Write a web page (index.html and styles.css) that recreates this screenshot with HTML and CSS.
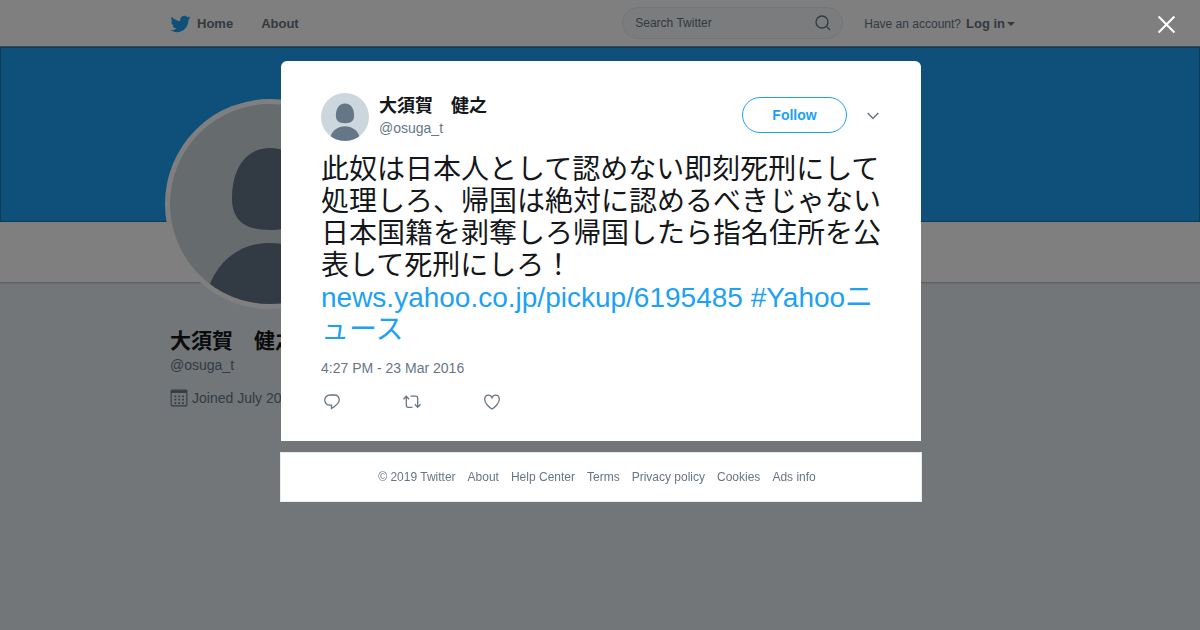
FILE: index.html
```html
<!DOCTYPE html>
<html lang="en">
    <head>
        <meta charset="utf-8">
        <meta name="viewport" content="width=device-width, initial-scale=1.0">
        <title>大須賀　健之 on Twitter</title>
        <link rel="stylesheet" href="styles.css">
    </head>
    <body>
        <header class="topbar">
            <div class="container topbar-inner">
                <nav class="nav">
                    <a class="nav-link" href="#">
                        <svg class="bird" viewBox="0 0 24 24" aria-hidden="true"><path d="M23.954 4.569c-.885.389-1.83.654-2.825.775 1.014-.611 1.794-1.574 2.163-2.723-.951.555-2.005.959-3.127 1.184-.896-.959-2.173-1.559-3.591-1.559-2.717 0-4.92 2.203-4.92 4.917 0 .39.045.765.127 1.124C7.691 8.094 4.066 6.13 1.64 3.161c-.427.722-.666 1.561-.666 2.475 0 1.71.87 3.213 2.188 4.096-.807-.026-1.566-.248-2.228-.616v.061c0 2.385 1.693 4.374 3.946 4.827-.413.111-.849.171-1.296.171-.314 0-.615-.03-.916-.086.631 1.953 2.445 3.377 4.604 3.417-1.68 1.319-3.809 2.105-6.102 2.105-.39 0-.779-.023-1.17-.067 2.189 1.394 4.768 2.209 7.557 2.209 9.054 0 13.999-7.496 13.999-13.986 0-.209 0-.42-.015-.63.961-.689 1.8-1.56 2.46-2.548l-.047-.02z"/></svg>
                        Home
                    </a>
                    <a class="nav-link" href="#">About</a>
                </nav>
                <form class="search">
                    <input class="search-input" type="text" placeholder="Search Twitter" aria-label="Search Twitter">
                    <button class="search-button" type="button" aria-label="Search">
                        <svg viewBox="0 0 16 16" aria-hidden="true"><circle cx="7" cy="7" r="6"/><path d="M11.4 11.4L15 15"/></svg>
                    </button>
                </form>
                <a class="login" href="#">Have an account? <b>Log in</b><span class="caret"></span></a>
            </div>
        </header>

        <div class="banner"></div>
        <div class="profile-bar"></div>
        <main class="container profile">
            <svg class="avatar avatar-big" viewBox="0 0 200 200" aria-hidden="true">
                <path d="M100 44C125 44 138 66 138 94C138 116 126 126 100 126C74 126 62 116 62 94C62 66 75 44 100 44Z"/>
                <path d="M100 139C72 139 50 154 39 182V200H161V182C150 154 128 139 100 139Z"/>
            </svg>
            <h1 class="profile-name">大須賀　健之</h1>
            <a class="handle" href="#">@osuga_t</a>
            <p class="joined">
                <svg viewBox="0 0 16 16" aria-hidden="true">
                    <rect x="1" y="1" width="14" height="14" rx="1"/>
                    <path d="M1 2.5H15" stroke-width="2"/>
                    <path d="M4 6.5H13M4 9.5H13M4 12.5H13" stroke-width="1.6" stroke-dasharray="1.6 1.8"/>
                </svg>
                Joined July 2013
            </p>
        </main>

        <div class="overlay">
            <button class="close" type="button" aria-label="Close">
                <svg viewBox="0 0 18 18" aria-hidden="true"><path d="M1.5 1.5L16.5 16.5M16.5 1.5L1.5 16.5"/></svg>
            </button>
            <div class="modal">
                <article class="tweet">
                    <div class="tweet-header">
                        <svg class="avatar" viewBox="0 0 200 200" aria-hidden="true">
                            <path d="M100 44C125 44 138 66 138 94C138 116 126 126 100 126C74 126 62 116 62 94C62 66 75 44 100 44Z"/>
                            <path d="M100 139C72 139 50 154 39 182V200H161V182C150 154 128 139 100 139Z"/>
                        </svg>
                        <div class="author">
                            <a class="author-name" href="#">大須賀　健之</a>
                            <a class="handle" href="#">@osuga_t</a>
                        </div>
                        <button class="follow" type="button">Follow</button>
                        <button class="more" type="button" aria-label="More">
                            <svg viewBox="0 0 12 8" aria-hidden="true"><path d="M.7 1L6 6.5L11.3 1"/></svg>
                        </button>
                    </div>
                    <p class="tweet-text" lang="ja">此奴は日本人として認めない即刻死刑にして処理しろ、帰国は絶対に認めるべきじゃない日本国籍を剥奪しろ帰国したら指名住所を公表して死刑にしろ！ <a href="#">news.yahoo.co.jp/pickup/6195485</a> <a href="#">#Yahooニュース</a></p>
                    <p class="date">4:27 PM - 23 Mar 2016</p>
                    <div class="actions">
                        <button type="button" aria-label="Reply">
                            <svg viewBox="0 0 22 18" aria-hidden="true"><path d="M9 2H13C16.5 2 18.2 4.3 18.2 7C18.2 10.5 15.5 12.5 10.5 15.5V12.2H9C5.5 12.2 3.8 10 3.8 7.1C3.8 4.2 5.8 2 9 2Z"/></svg>
                        </button>
                        <button type="button" aria-label="Retweet">
                            <svg viewBox="0 0 22 18" aria-hidden="true"><path d="M2.5 6.3L5.3 3.2L8.1 6.3M5.3 3.5V12.5Q5.3 14.3 7 14.3H11.5M9.5 3.2H15Q16.7 3.2 16.7 5V14M13.9 11.3L16.7 14.4L19.5 11.3"/></svg>
                        </button>
                        <button type="button" aria-label="Like">
                            <svg viewBox="0 0 22 18" aria-hidden="true"><path d="M11 16C8 14.3 3.7 10.3 3.7 6.3C3.7 3.8 5.3 2.2 7.4 2.2C9.2 2.2 10.4 3.3 11 4.8C11.6 3.3 12.8 2.2 14.6 2.2C16.7 2.2 18.3 3.8 18.3 6.3C18.3 10.3 14 14.3 11 16Z"/></svg>
                        </button>
                    </div>
                </article>
                <footer class="footer">
                    <span>© 2019 Twitter</span>
                    <a href="#">About</a>
                    <a href="#">Help Center</a>
                    <a href="#">Terms</a>
                    <a href="#">Privacy policy</a>
                    <a href="#">Cookies</a>
                    <a href="#">Ads info</a>
                </footer>
            </div>
        </div>
    </body>
</html>
```
FILE: styles.css
```css
* {
    box-sizing: border-box;
}

body {
    margin: 0;
    background-color: #e6ecf0;
    color: #14171a;
    font-family: "Liberation Sans", "Noto Sans CJK JP", sans-serif;
    font-size: 14px;
    line-height: 20px;
}

h1, p {
    margin: 0;
}

a {
    color: inherit;
    text-decoration: none;
}

button {
    padding: 0;
    border: 0;
    background: none;
    color: inherit;
    font-family: inherit;
    cursor: pointer;
}

svg {
    display: block;
    fill: none;
    stroke: currentColor;
}

.container {
    max-width: 860px;
    margin: 0 auto;
}

/* top bar */
.topbar {
    height: 47px;
    background-color: #fff;
    border-bottom: 1px solid #8a8f94;
    color: #66757f;
}

.topbar-inner {
    display: flex;
    align-items: center;
    height: 46px;
}

.nav {
    display: flex;
    flex: 1;
    gap: 28px;
    padding-top: 2px;
    font-size: 13px;
    font-weight: bold;
}

.nav-link {
    display: flex;
    align-items: center;
    gap: 6px;
}

.bird {
    width: 21px;
    height: 20px;
    fill: #1da1f2;
    stroke: none;
}

.search {
    display: flex;
    align-items: center;
    width: 221px;
    height: 32px;
    padding: 0 11px 0 12px;
    border: 1px solid #e6ecf0;
    border-radius: 16px;
    background-color: #f5f8fa;
}

.search-input {
    flex: 1;
    min-width: 0;
    padding: 0;
    border: 0;
    background: none;
    color: inherit;
    font-family: inherit;
    font-size: 12px;
}

.search-input::placeholder {
    color: #66757f;
}

.search-button {
    color: #66757f;
}

.search-button svg {
    width: 16px;
    height: 16px;
    stroke-width: 1.3;
}

.login {
    display: flex;
    align-items: center;
    gap: 5px;
    margin: 0 15px 0 21px;
    padding-top: 2px;
    font-size: 12px;
}

.login b {
    font-size: 13px;
}

.caret {
    margin-left: -3px;
    border: 4px solid transparent;
    border-top-color: currentColor;
    border-bottom: 0;
}

/* profile */
.banner {
    height: 175px;
    border: 1px solid #167ab8;
    background-color: #1da1f2;
}

.profile-bar {
    height: 60px;
    background-color: #fff;
    box-shadow: 0 1px 2px rgba(0, 0, 0, 0.25);
}

.avatar {
    width: 48px;
    height: 48px;
    border-radius: 50%;
    background-color: #ccd6dd;
    fill: #657786;
    stroke: none;
}

.avatar-big {
    width: 210px;
    height: 210px;
    margin: -183px 0 0 -5px;
    border: 5px solid #fff;
}

.profile {
    position: relative;
}

.profile-name {
    margin-top: 18px;
    font-size: 21px;
    line-height: 28px;
}

.handle {
    color: #657786;
}

.joined {
    display: flex;
    align-items: center;
    gap: 4px;
    margin-top: 13px;
    color: #657786;
}

.joined svg {
    width: 18px;
    height: 18px;
}

/* tweet overlay */
.overlay {
    position: fixed;
    inset: 0;
    padding: 61px 0 0 2px;
    overflow: auto;
    background-color: rgba(0, 0, 0, 0.5);
}

.close {
    position: absolute;
    top: 15px;
    right: 24px;
    color: #fff;
}

.close svg {
    width: 19px;
    height: 19px;
    stroke-width: 2;
}

.modal {
    max-width: 642px;
    margin: 0 auto;
}

.tweet {
    margin: 0 1px;
    padding: 32px 40px 30px;
    border-radius: 6px 6px 0 0;
    background-color: #fff;
}

.tweet-header {
    display: flex;
    align-items: center;
}

.author {
    display: flex;
    flex: 1;
    flex-direction: column;
    margin-left: 10px;
    padding-bottom: 3px;
}

.author-name {
    font-size: 18px;
    font-weight: bold;
    line-height: 24px;
}

.follow {
    width: 105px;
    height: 36px;
    margin-bottom: 4px;
    border: 1px solid #1da1f2;
    border-radius: 18px;
    color: #1da1f2;
    font-size: 14px;
    font-weight: bold;
}

.more {
    margin: 0 2px 2px 20px;
    color: #657786;
}

.more svg {
    width: 12px;
    height: 8px;
    stroke-width: 1.5;
}

.tweet-text {
    margin-top: 13px;
    font-size: 28px;
    line-height: 32px;
    word-break: break-word;
}

.tweet-text a {
    color: #1da1f2;
}

.date {
    margin-top: 12px;
    color: #657786;
}

.actions {
    display: flex;
    gap: 58px;
    margin-top: 15px;
    color: #657786;
}

.actions svg {
    width: 22px;
    height: 18px;
    stroke-width: 1.3;
}

.footer {
    display: flex;
    flex-wrap: wrap;
    justify-content: center;
    gap: 12px;
    margin-top: 11px;
    padding: 15px 8px 15px 0;
    border: 1px solid #e6ecf0;
    background-color: #fff;
    color: #657786;
    font-size: 12px;
    line-height: 18px;
}
```
